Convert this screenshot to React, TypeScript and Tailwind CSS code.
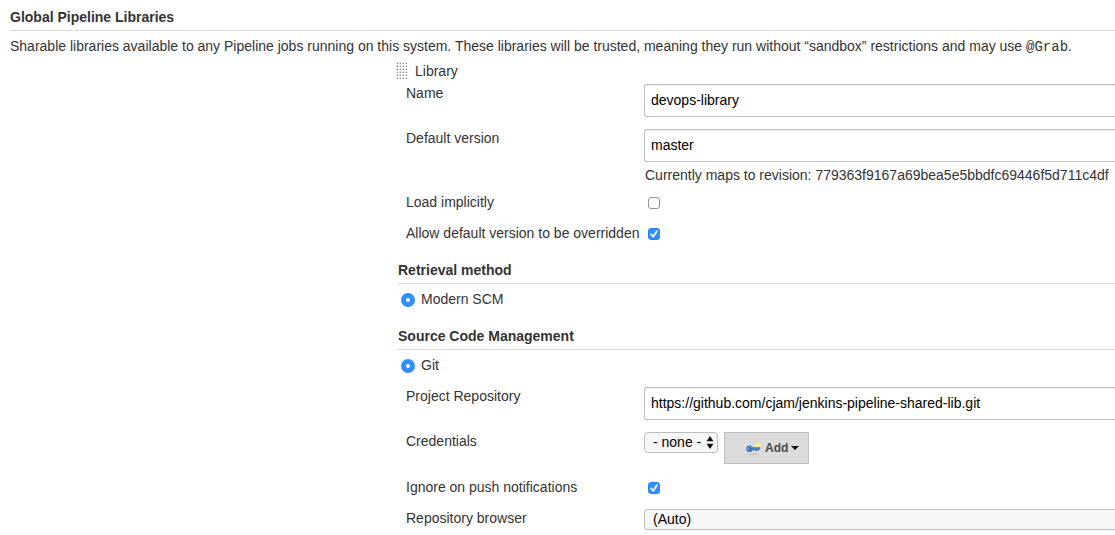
import { useId, type ReactNode } from "react";

function SectionTitle({ children }: { children: ReactNode }) {
  return (
    <h2 className="border-b border-[#d9d9d9] pb-[3px] font-bold">{children}</h2>
  );
}

function Field({
  label,
  htmlFor,
  children,
}: {
  label: string;
  htmlFor: string;
  children: ReactNode;
}) {
  return (
    <div className="grid grid-cols-[238px_minmax(0,1fr)] items-start pl-2">
      <label htmlFor={htmlFor} className="whitespace-nowrap">
        {label}
      </label>
      {children}
    </div>
  );
}

function TextField({
  label,
  value,
  help,
}: {
  label: string;
  value: string;
  help?: string;
}) {
  const id = useId();
  return (
    <Field label={label} htmlFor={id}>
      <div className="pt-px">
        <input
          id={id}
          type="text"
          defaultValue={value}
          className="block h-[33px] w-full rounded-l-[3px] border border-r-0 border-[#bfbfbf] bg-white px-1.5 pb-0.5 text-black shadow-[inset_0_1px_1px_rgba(0,0,0,0.075)] outline-none"
        />
        {help && (
          <p className="mt-[7px] pl-px leading-3 whitespace-nowrap">{help}</p>
        )}
      </div>
    </Field>
  );
}

function CheckField({ label, checked }: { label: string; checked?: boolean }) {
  const id = useId();
  return (
    <Field label={label} htmlFor={id}>
      <div className="grid w-5 justify-items-center pt-[5px]">
        <input
          id={id}
          type="checkbox"
          defaultChecked={checked}
          className="peer col-start-1 row-start-1 size-3 appearance-none rounded-[3px] border border-[#949494] bg-white checked:border-[#2684fb] checked:bg-[#318efd]"
        />
        <svg
          viewBox="0 0 12 12"
          className="pointer-events-none col-start-1 row-start-1 hidden size-3 peer-checked:block"
          fill="none"
          stroke="white"
          strokeWidth="1.8"
          strokeLinecap="round"
          strokeLinejoin="round"
          aria-hidden="true"
        >
          <path d="M3.2 6.5 5.2 8.7 8.8 3.2" />
        </svg>
      </div>
    </Field>
  );
}

function RadioOption({ label, name }: { label: string; name: string }) {
  return (
    <label className="flex items-center gap-1.5 pt-[5px] pl-[3px]">
      <input
        type="radio"
        name={name}
        defaultChecked
        className="mt-0.5 size-3.5 appearance-none rounded-full border border-[#949494] bg-white checked:border-5 checked:border-[#318efd]"
      />
      {label}
    </label>
  );
}

function DragHandle() {
  const id = useId();
  return (
    <svg width="12" height="18" aria-hidden="true">
      <defs>
        <pattern id={id} width="3" height="3" patternUnits="userSpaceOnUse">
          <path d="M1 1h1v1h-1z" fill="#8f8f8f" />
          <path d="M0 1h1v1h-1zM1 0h1v1h-1z" fill="#cfcfcf" />
        </pattern>
      </defs>
      <rect width="12" height="18" fill={`url(#${id})`} />
    </svg>
  );
}

function KeyIcon() {
  return (
    <svg width="16" height="16" viewBox="0 0 16 16" aria-hidden="true">
      <ellipse cx="7.500" cy="14.300" rx="5.500" ry=".8" fill="#c4c4c4" />
      <circle cx="12.500" cy="4.500" r="2.600" fill="#f3ec84" />
      <circle cx="12.500" cy="4.500" r="1.400" fill="#fff34a" />
      <path
        d="M4.500 5.500C6 5.500 7.200 6.200 7.800 7.200h7l.6 1.100-.7 1.300h-1v1.400h-1.300V10h-.8v1H10V9.900H7.800C7.200 11.200 6 12 4.500 12 2.500 12 1 10.600 1 8.800s1.500-3.300 3.500-3.300z"
        fill="#3d75b5"
      />
      <path
        d="M2.500 7.400C3.800 6.300 6 6.400 7 8h7.300"
        fill="none"
        stroke="#6d9dd2"
        strokeWidth=".8"
      />
      <circle cx="3" cy="9" r=".8" fill="#a9c6e6" />
    </svg>
  );
}

function CredentialsField() {
  const id = useId();
  return (
    <Field label="Credentials" htmlFor={id}>
      <div className="flex items-start gap-1.5 pt-px pb-0.5">
        <div className="grid w-[74px]">
          <select
            id={id}
            className="col-start-1 row-start-1 h-[21px] w-full appearance-none rounded-[4px] border border-[#bdbdbd] bg-[#f7f7f7] pb-0.5 pl-2 leading-4 text-black"
          >
            <option>- none -</option>
          </select>
          <svg
            width="8"
            height="13"
            viewBox="0 0 8 13"
            className="pointer-events-none col-start-1 row-start-1 mr-1 self-center justify-self-end"
            aria-hidden="true"
          >
            <path d="M4 0 7.500 5.200H.5zM4 13 .5 7.800h7z" fill="#111" />
          </svg>
        </div>
        <button
          type="button"
          className="flex h-8 w-[85px] items-center border border-[#bfbfbf] bg-[#dbdbdb] pl-5 text-xs font-bold text-[#4a4a4a]"
        >
          <KeyIcon />
          <span className="ml-1">Add</span>
          <svg width="8" height="4" className="ml-[3px]" aria-hidden="true">
            <path d="M0 0h8L4 4z" fill="#111" />
          </svg>
        </button>
      </div>
    </Field>
  );
}

function BrowserField() {
  const id = useId();
  return (
    <Field label="Repository browser" htmlFor={id}>
      <select
        id={id}
        className="mt-px h-[21px] w-full appearance-none rounded-l-[4px] border border-r-0 border-[#bdbdbd] bg-[#f7f7f7] pb-0.5 pl-2 leading-4 text-black"
      >
        <option>(Auto)</option>
      </select>
    </Field>
  );
}

export default function App() {
  return (
    <main className="overflow-hidden bg-white pt-[7px] pl-2.5 font-['Liberation_Sans',Arial,sans-serif] text-sm leading-5 text-[#333]">
      <SectionTitle>Global Pipeline Libraries</SectionTitle>
      <p className="pt-[5px]">
        Sharable libraries available to any Pipeline jobs running on this
        system. These libraries will be trusted, meaning they run without
        “sandbox” restrictions and may use{" "}
        <code className="font-['Liberation_Mono',monospace] leading-4">
          @Grab
        </code>
        .
      </p>
      <div className="pt-[5px] pl-[386px]">
        <div className="mb-0.5 flex items-center gap-[7px]">
          <DragHandle />
          <span>Library</span>
        </div>
        <form className="flex flex-col gap-[11px] pl-0.5">
          <TextField label="Name" value="devops-library" />
          <TextField
            label="Default version"
            value="master"
            help="Currently maps to revision: 779363f9167a69bea5e5bbdfc69446f5d711c4df"
          />
          <CheckField label="Load implicitly" />
          <CheckField label="Allow default version to be overridden" checked />
          <section className="pt-1.5">
            <SectionTitle>Retrieval method</SectionTitle>
            <RadioOption label="Modern SCM" name="retrieval" />
          </section>
          <section className="pt-1.5">
            <SectionTitle>Source Code Management</SectionTitle>
            <RadioOption label="Git" name="scm" />
          </section>
          <TextField
            label="Project Repository"
            value="https://github.com/cjam/jenkins-pipeline-shared-lib.git"
          />
          <CredentialsField />
          <CheckField label="Ignore on push notifications" checked />
          <BrowserField />
        </form>
      </div>
    </main>
  );
}
